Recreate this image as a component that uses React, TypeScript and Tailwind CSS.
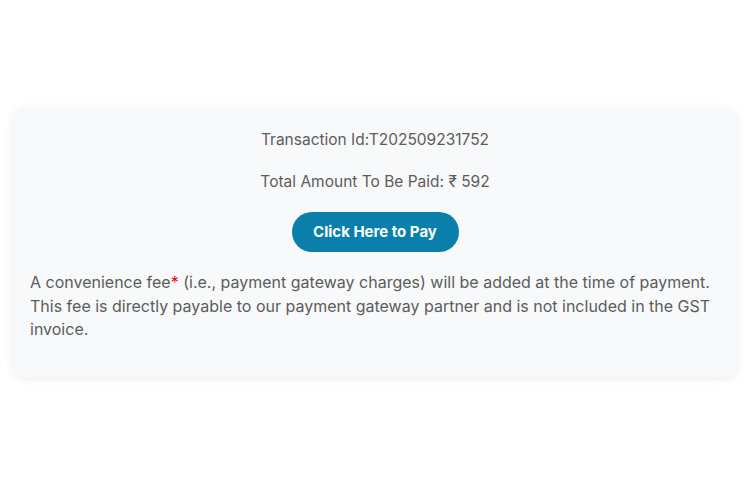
export default function App() {
  return (
    <main className="min-h-screen bg-white pt-[108px] px-[13px] font-['Inter',sans-serif]">
      <section className="rounded-xl bg-[#f8f9fb] shadow-[0_2px_10px_rgba(0,0,0,0.08)] px-[17px] pt-[21px] pb-[35px] text-[#5c5c5c]">
        <div className="flex flex-col items-center">
          <p className="text-[15.5px] leading-[22px]">Transaction Id:T202509231752</p>
          <p className="mt-[20px] text-[15.5px] leading-[22px]">Total Amount To Be Paid: ₹ 592</p>
          <button className="mt-[19px] h-[40px] w-[167px] rounded-full bg-[#0a7fab] text-[15px] font-bold text-white">
            Click Here to Pay
          </button>
        </div>
        <p className="mt-[19px] text-[16px] leading-[23.5px]">
          A convenience fee<span className="text-red-600">*</span> (i.e., payment gateway charges) will be added at the time of payment.
          <br />
          This fee is directly payable to our payment gateway partner and is not included in the GST invoice.
        </p>
      </section>
    </main>
  );
}
